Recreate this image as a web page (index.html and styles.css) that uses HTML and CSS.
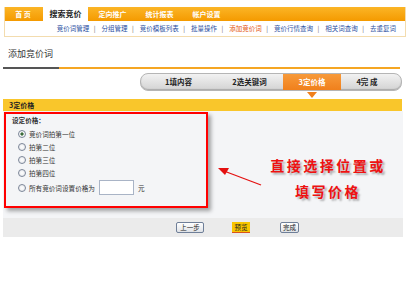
FILE: index.html
```html
<!DOCTYPE html>
<html lang="zh-CN">
<head>
    <meta charset="UTF-8">
    <title>添加竞价词</title>
    <link rel="stylesheet" href="styles.css">
</head>
<body>
    <div class="topnav">
        <div class="tabs">
            <div class="tab first">首&nbsp;页</div>
            <div class="tab active">搜索竞价</div>
            <div class="tab">定向推广</div>
            <div class="tab">统计报表</div>
            <div class="tab">帐户设置</div>
        </div>
        <div class="subnav">
            <a>竞价词管理</a><span class="sep">|</span>
            <a>分组管理</a><span class="sep">|</span>
            <a>竞价模板列表</a><span class="sep">|</span>
            <a>批量操作</a><span class="sep">|</span>
            <a class="current">添加竞价词</a><span class="sep">|</span>
            <a>竞价行情查询</a><span class="sep">|</span>
            <a>相关词查询</a><span class="sep">|</span>
            <a>去重复词</a>
        </div>
    </div>

    <div class="page-title">添加竞价词</div>
    <div class="title-line"></div>

    <div class="steps">
        <div class="step s1">1填内容</div>
        <div class="step s2">2选关键词</div>
        <div class="step s3 on">3定价格</div>
        <div class="step s4">4完&nbsp;成</div>
    </div>

    <div class="section-bar">3定价格</div>

    <div class="content">
        <div class="price-box">
            <div class="box-title">设定价格：</div>
            <div class="opt"><span class="radio checked"></span>竞价词拍第一位</div>
            <div class="opt"><span class="radio"></span>拍第二位</div>
            <div class="opt"><span class="radio"></span>拍第三位</div>
            <div class="opt"><span class="radio"></span>拍第四位</div>
            <div class="opt last"><span class="radio"></span>所有竞价词设置价格为<span class="price-input"></span>元</div>
        </div>

        <svg class="arrow" width="50" height="24" viewBox="0 0 50 24">
            <line x1="45" y1="20" x2="8" y2="6" stroke="#e41010" stroke-width="1.3"/>
            <polygon points="2,3 13,3 9,10" fill="#e41010"/>
        </svg>
        <div class="note">直接选择位置或<br>填写价格</div>
    </div>

    <div class="footer">
        <span class="btn prev">上一步</span>
        <span class="btn preview">预览</span>
        <span class="btn done">完成</span>
    </div>
</body>
</html>
```

FILE: styles.css
```css
body {
    margin: 0;
    background: #fff;
    font-family: "Noto Sans CJK SC", "Noto Sans", sans-serif;
    color: #333;
}

.topnav {
    margin: 7px 4px 0 4px;
    border: 1px solid #f3dcae;
    border-top: none;
}

.tabs {
    display: flex;
    gap: 2px;
    height: 14px;
    background: linear-gradient(#fbb526, #f49a00);
}

.tab {
    width: 45px;
    font-size: 7px;
    font-weight: bold;
    line-height: 14px;
    color: #fff;
    text-align: center;
}

.tab.first {
    width: 36px;
}

.tab.active {
    margin-top: -1px;
    height: 15px;
    line-height: 16px;
    background: #fff;
    color: #222;
    font-size: 8px;
}

.subnav {
    height: 15px;
    line-height: 15px;
    font-size: 6.5px;
    text-align: right;
    padding-right: 9px;
    background: #fff;
}

.subnav a {
    color: #2a4f9f;
}

.subnav a.current {
    color: #e3540b;
}

.subnav .sep {
    color: #666;
    margin: 0 4.5px;
}

.page-title {
    height: 30px;
    box-sizing: border-box;
    padding: 12px 0 0 8px;
    font-size: 9px;
    line-height: 10px;
    color: #333;
}

.title-line {
    height: 2px;
    margin: 0 10px 0 3px;
    background: linear-gradient(to right, #555 0, #555 56px, #f5a623 56px);
}

.steps {
    display: flex;
    margin: 4px 8px 0 140px;
    height: 16px;
    border: 1px solid #b5b5b5;
    border-radius: 8px;
    background: linear-gradient(#f2f2f2, #d3d3d3);
    box-shadow: inset 0 -1px 1px #aaa;
}

.step {
    font-size: 7.5px;
    font-weight: bold;
    line-height: 16px;
    text-align: center;
    color: #222;
}

.step.s1 { width: 75px; }
.step.s2 { width: 67px; }
.step.s3 { width: 58px; }
.step.s4 { flex: 1; padding-right: 8px; }

.step.on {
    position: relative;
    color: #fff;
    background: linear-gradient(#f79a3a, #f0801c);
}

.step.on::after {
    content: "";
    position: absolute;
    left: 24px;
    bottom: -8px;
    border-left: 5px solid transparent;
    border-right: 5px solid transparent;
    border-top: 6px solid #f0801c;
}

.section-bar {
    height: 12px;
    margin: 8px 8px 0 3px;
    padding-left: 6px;
    background: #f9c62b;
    font-size: 7px;
    font-weight: bold;
    line-height: 12px;
    color: #222;
}

.content {
    position: relative;
    height: 107px;
    margin: 0 7px 0 3px;
    padding: 1px 0 0 1px;
    box-sizing: border-box;
    background: #f4f5f7;
}

.price-box {
    width: 204px;
    height: 96px;
    box-sizing: border-box;
    padding: 1px 0 0 6px;
    border: 2px solid #f00;
    box-shadow: 3px 3px 4px rgba(0, 0, 0, 0.35);
    font-size: 6.6px;
    color: #333;
}

.box-title {
    height: 10px;
    line-height: 10px;
    font-weight: bold;
    margin-bottom: 3px;
}

.opt {
    display: flex;
    align-items: center;
    height: 12.8px;
    padding-left: 6px;
}

.opt.last {
    height: 15px;
    margin-top: 1px;
}

.radio {
    width: 6px;
    height: 6px;
    margin-right: 3px;
    border: 0.8px solid #7c8698;
    border-radius: 50%;
    background: radial-gradient(#fff, #e2e4e8);
}

.radio.checked {
    background: radial-gradient(#3a6a3a 0, #3a6a3a 1.4px, #fff 1.8px, #e2e4e8);
}

.price-input {
    width: 33px;
    height: 13px;
    margin: 0 4px 0 4px;
    border: 1px solid #a9b4c6;
    background: #fff;
}

.arrow {
    position: absolute;
    left: 213px;
    top: 54px;
}

.note {
    position: absolute;
    left: 262px;
    top: 41px;
    width: 126px;
    text-align: center;
    font-size: 14px;
    font-weight: bold;
    line-height: 26px;
    letter-spacing: 2.5px;
    color: #ee1111;
    text-shadow: 2px 2px 2px rgba(0, 0, 0, 0.3);
}

.footer {
    display: flex;
    align-items: center;
    height: 19px;
    margin: 0 7px 0 3px;
    padding-left: 173px;
    background: #ebebeb;
}

.btn {
    height: 11px;
    box-sizing: border-box;
    font-size: 6.5px;
    line-height: 9px;
    text-align: center;
    color: #222;
    border: 1px solid #6f7f98;
    border-radius: 2px;
    background: linear-gradient(#fff, #dfe2e6);
}

.btn.prev {
    width: 28px;
}

.btn.preview {
    width: 18px;
    margin-left: 28px;
    border: none;
    border-bottom: 1px solid #d8541b;
    border-radius: 0;
    background: #f8c500;
    line-height: 10px;
}

.btn.done {
    width: 19px;
    margin-left: 30px;
}
```
